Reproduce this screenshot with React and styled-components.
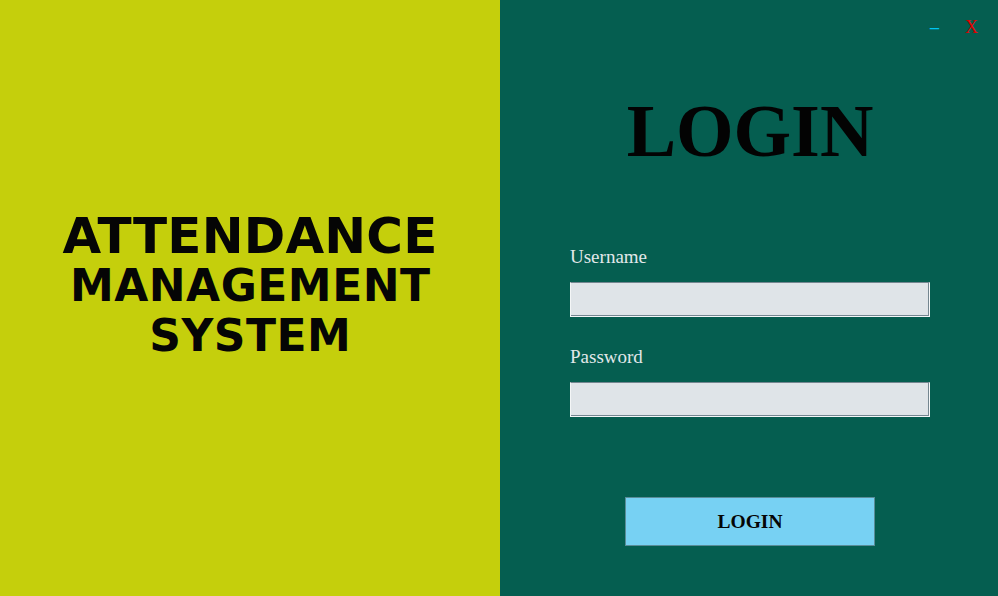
import React from 'react'
import styled, { createGlobalStyle } from 'styled-components'

const Global = createGlobalStyle`
	html, body {
		margin: 0;
		padding: 0;
	}
	body {
		font-family: "Liberation Serif", serif;
	}
`

const Frame = styled.div`
	display: flex;
	width: 998px;
	height: 596px;
	overflow: hidden;
`

const Brand = styled.div`
	flex: 0 0 500px;
	background-color: #c5cf0c;
	display: flex;
	flex-flow: column;
	align-items: center;
	justify-content: center;
	padding-bottom: 24px;
	box-sizing: border-box;
	color: #050505;
	font-family: "DejaVu Sans", sans-serif;
	font-weight: 700;
	text-align: center;
`

const BrandLine = styled.div`
	font-size: ${ p => p.size }px;
	line-height: 50px;
	letter-spacing: ${ p => p.spacing || 0 }px;
	margin-right: ${ p => -(p.spacing || 0) }px;
`

const Panel = styled.div`
	position: relative;
	flex: 1;
	background-color: #055e50;
	display: flex;
	flex-flow: column;
	align-items: center;
	padding-top: 94px;
	padding-left: 2px;
	box-sizing: border-box;
`

const WindowControls = styled.div`
	position: absolute;
	top: 16px;
	right: 20px;
	display: flex;
	align-items: center;
	gap: 26px;
	font-family: "Liberation Serif", serif;
	font-size: 18px;
	line-height: 22px;
`

const Control = styled.span`
	color: ${ p => p.color };
	font-weight: ${ p => p.bold ? 700 : 400 };
	cursor: pointer;
`

const Title = styled.h1`
	margin: 0;
	font-family: "Liberation Serif", serif;
	font-weight: 700;
	font-size: 74px;
	line-height: 74px;
	color: #030303;
`

const Form = styled.div`
	width: 360px;
	margin-top: 78px;
	display: flex;
	flex-flow: column;
`

const Label = styled.label`
	display: block;
	font-size: 19px;
	line-height: 22px;
	color: #e2e8ea;
	margin-top: ${ p => p.gap || 0 }px;
`

const Input = styled.input`
	display: block;
	width: 100%;
	height: 35px;
	margin-top: 14px;
	box-sizing: border-box;
	background: #dfe4e8;
	border: 1px solid;
	border-color: #748690 #f4f6f7 #f4f6f7 #f4f6f7;
	box-shadow: inset -1px -1px 0 #748690;
	outline: none;
	font-family: "Liberation Sans", sans-serif;
	font-size: 15px;
	padding: 0 8px;
`

const Button = styled.button`
	margin-top: 80px;
	width: 250px;
	height: 49px;
	background: #77d1f3;
	border: 1px solid #5a8c98;
	font-family: "Liberation Serif", serif;
	font-weight: 700;
	font-size: 19.5px;
	color: #050505;
	cursor: pointer;
`

export default function App() {
	return <>
		<Global/>
		<Frame>
			<Brand>
				<BrandLine size={ 50 } spacing={ 0.2 }>ATTENDANCE</BrandLine>
				<BrandLine size={ 44 } spacing={ 0.5 }>MANAGEMENT</BrandLine>
				<BrandLine size={ 44 } spacing={ 0.5 }>SYSTEM</BrandLine>
			</Brand>
			<Panel>
				<WindowControls>
					<Control color="#00c4f0" bold>–</Control>
					<Control color="#e00000">X</Control>
				</WindowControls>
				<Title>LOGIN</Title>
				<Form>
					<Label>Username</Label>
					<Input type="text"/>
					<Label gap={ 29 }>Password</Label>
					<Input type="password"/>
				</Form>
				<Button>LOGIN</Button>
			</Panel>
		</Frame>
	</>
}
